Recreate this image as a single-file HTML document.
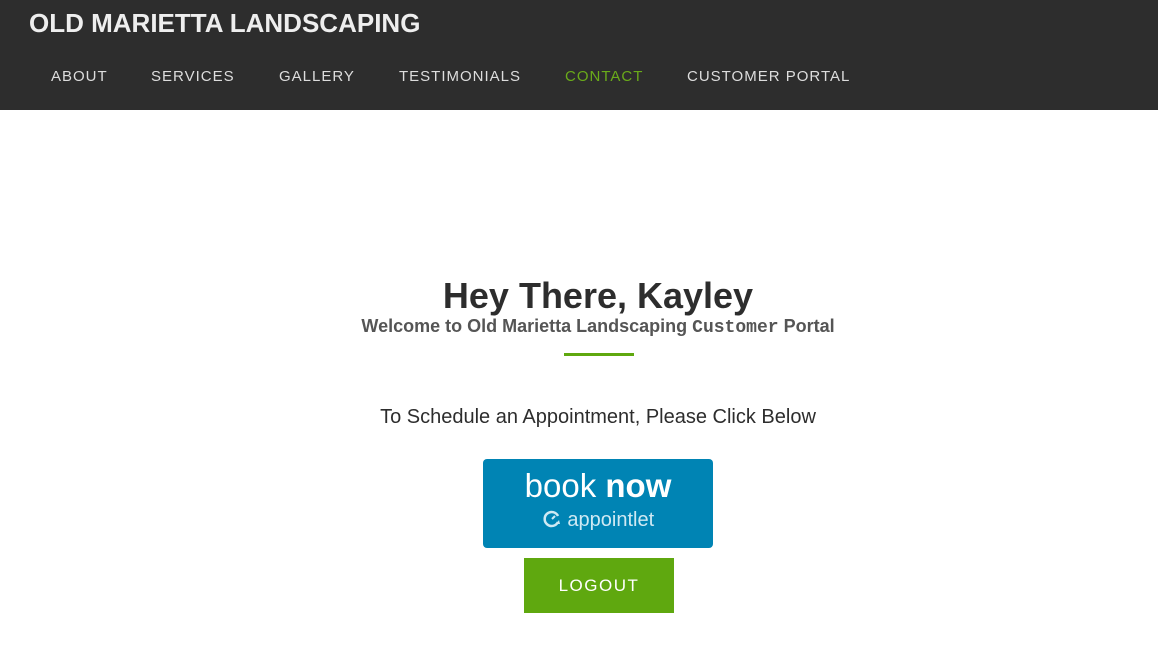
<!DOCTYPE html>
<html><head><style>
body{margin:0;width:1158px;height:669px;background:#fff;font-family:"Liberation Sans",sans-serif;overflow:hidden;position:relative}
.hdr{position:absolute;left:0;top:0;width:1158px;height:110px;background:#2d2d2d}
.logo{position:absolute;left:29px;top:8px;font-size:26px;font-weight:bold;color:#eee;letter-spacing:0}
.nav span{position:absolute;top:68px;font-size:15px;color:#ddd;letter-spacing:1px}
.c{position:absolute;left:19px;width:1158px;text-align:center}
</style></head><body>
<div class="hdr">
<div class="logo">OLD MARIETTA LANDSCAPING</div>
<div class="nav">
<span style="left:51px">ABOUT</span>
<span style="left:151px">SERVICES</span>
<span style="left:279px">GALLERY</span>
<span style="left:399px">TESTIMONIALS</span>
<span style="left:565px;color:#6aab1a">CONTACT</span>
<span style="left:687px">CUSTOMER PORTAL</span>
</div></div>
<div class="c" style="top:275px;font-size:36px;font-weight:bold;color:#2d2d2d">Hey There, Kayley</div>
<div class="c" style="top:316px;font-size:18px;font-weight:bold;color:#555">Welcome to Old Marietta Landscaping <span style="font-family:'Liberation Mono',monospace">Customer</span> Portal</div>
<div style="position:absolute;left:564px;top:353px;width:70px;height:3px;background:#5fa80f"></div>
<div class="c" style="top:406px;font-size:20px;color:#2d2d2d">To Schedule an Appointment, Please Click Below</div>
<div style="position:absolute;left:483px;top:459px;width:230px;height:89px;background:#0084b4;border-radius:4px;color:#fff;text-align:center">
<div style="font-size:33px;margin-top:7px;line-height:40px">book <span style="font-weight:bold">now</span></div>
<div style="font-size:20px;color:#cfe9f3;margin-top:3px"><svg width="20" height="20" viewBox="0 0 20 20" style="vertical-align:-3px"><path d="M16 13A7 7 0 1 1 16 7" fill="none" stroke="#cfe9f3" stroke-width="2.5"/><path d="M10 10l3-3" stroke="#cfe9f3" stroke-width="2"/><path d="M14 15l4 0-1-4z" fill="#cfe9f3"/></svg> appointlet</div>
</div>
<div style="position:absolute;left:524px;top:558px;width:150px;height:55px;background:#5fa80f;color:#fff;font-size:17px;letter-spacing:1.5px;text-align:center;line-height:55px">LOGOUT</div>
</body></html>
